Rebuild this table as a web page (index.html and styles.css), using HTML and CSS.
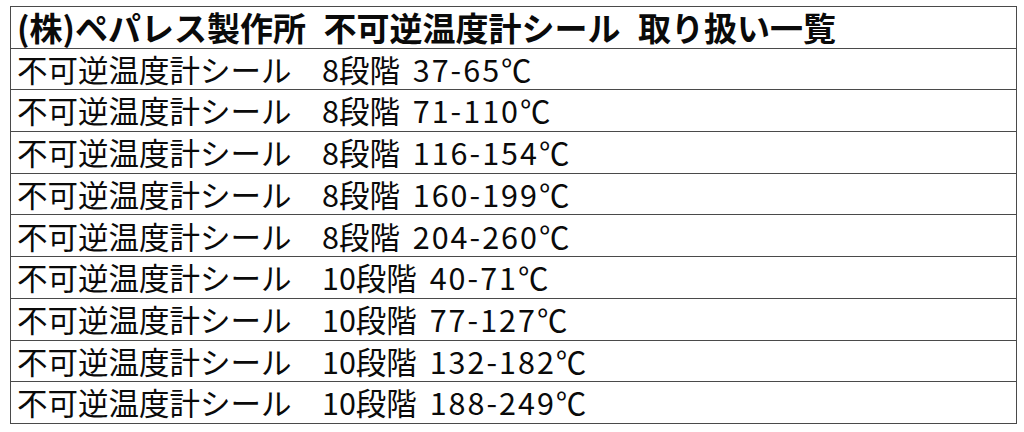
FILE: index.html
```html
<!DOCTYPE html>
<html lang="ja">
<head>
<meta charset="utf-8">
<link rel="stylesheet" href="styles.css">
</head>
<body>
<table class="list">
<tr><th>(株)ペパレス製作所 不可逆温度計シール 取り扱い一覧</th></tr>
<tr><td>不可逆温度計シール　8段階 <span class="temp">37-65℃</span></td></tr>
<tr><td>不可逆温度計シール　8段階 <span class="temp">71-110℃</span></td></tr>
<tr><td>不可逆温度計シール　8段階 <span class="temp">116-154℃</span></td></tr>
<tr><td>不可逆温度計シール　8段階 <span class="temp">160-199℃</span></td></tr>
<tr><td>不可逆温度計シール　8段階 <span class="temp">204-260℃</span></td></tr>
<tr><td>不可逆温度計シール　10段階 <span class="temp">40-71℃</span></td></tr>
<tr><td>不可逆温度計シール　10段階 <span class="temp">77-127℃</span></td></tr>
<tr><td>不可逆温度計シール　10段階 <span class="temp">132-182℃</span></td></tr>
<tr><td>不可逆温度計シール　10段階 <span class="temp">188-249℃</span></td></tr>
</table>
</body>
</html>
```
FILE: styles.css
```css
html, body {
  margin: 0;
  padding: 0;
  background: #ffffff;
}
body {
  padding: 6px 0 0 10px;
  font-family: "Noto Sans CJK JP", "Noto Sans", sans-serif;
  color: #0a0a0a;
}
.list {
  border-collapse: collapse;
  width: 1007px;
}
.list th,
.list td {
  height: 41.7px;
  padding: 0 6px;
  border: 1px solid #4a4a4a;
  text-align: left;
  white-space: nowrap;
  line-height: 1;
  box-sizing: border-box;
}
.list th {
  font-size: 33px;
  font-weight: bold;
  word-spacing: 10px;
}
.list td {
  font-size: 30.5px;
  font-weight: normal;
  word-spacing: 6px;
}
.temp {
  letter-spacing: 2px;
}
```
